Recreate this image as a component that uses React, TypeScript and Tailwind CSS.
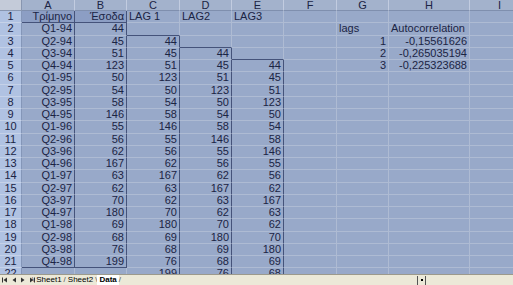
const quarters = [
  'Q1-94', 'Q2-94', 'Q3-94', 'Q4-94',
  'Q1-95', 'Q2-95', 'Q3-95', 'Q4-95',
  'Q1-96', 'Q2-96', 'Q3-96', 'Q4-96',
  'Q1-97', 'Q2-97', 'Q3-97', 'Q4-97',
  'Q1-98', 'Q2-98', 'Q3-98', 'Q4-98',
];
const sales = [44, 45, 51, 123, 50, 54, 58, 146, 55, 56, 62, 167, 63, 62, 70, 180, 69, 68, 76, 199];

const cols = ['A', 'B', 'C', 'D', 'E', 'F', 'G', 'H', 'I'];
const widths = ['w-[53px]', 'w-[52px]', 'w-[53px]', 'w-[52px]', 'w-[52px]', 'w-[53px]', 'w-[52px]', 'w-[81px]', 'w-[60px]'];

type Cell = { text?: string | number; align?: 'l' | 'r'; cls?: string };

function lag(row: number, n: number): Cell {
  // row is sheet row number, data starts on row 2
  const i = row - 2 - n;
  if (i < 0 || i >= sales.length) return {};
  return { text: sales[i], align: 'r' };
}

function cellsFor(row: number): Cell[] {
  const out: Cell[] = Array.from({ length: 9 }, () => ({}));
  if (row === 1) {
    out[0] = { text: 'Τρίμηνο', align: 'r', cls: 'bg-[#8c9ec4]' };
    out[1] = { text: 'Έσοδα', align: 'r', cls: 'bg-[#8c9ec4]' };
    out[2] = { text: 'LAG 1', align: 'l' };
    out[3] = { text: 'LAG2', align: 'l' };
    out[4] = { text: 'LAG3', align: 'l' };
    return out;
  }
  if (row <= 21) {
    out[0] = { text: quarters[row - 2], align: 'r' };
    out[1] = { text: sales[row - 2], align: 'r' };
  }
  out[2] = lag(row, 1);
  out[3] = lag(row, 2);
  out[4] = lag(row, 3);
  if (row === 2) {
    out[6] = { text: 'lags', align: 'l' };
    out[7] = { text: 'Autocorrelation', align: 'l' };
  }
  const ac: Record<number, [string, string]> = {
    3: ['1', '-0,15561626'],
    4: ['2', '-0,265035194'],
    5: ['3', '-0,225323688'],
  };
  if (ac[row]) {
    out[6] = { text: ac[row][0], align: 'r' };
    out[7] = { text: ac[row][1], align: 'r' };
  }
  return out;
}

const LIGHT_R = 'border-r-[#aebbd3]';
const LIGHT_B = 'border-b-[#aebbd3]';
const DARK_R = 'border-r-[#45537a]';
const DARK_B = 'border-b-[#45537a]';

function borderFor(row: number, col: number) {
  // dark boxes round the data ranges
  let r = LIGHT_R;
  let b = LIGHT_B;
  if (col <= 1 && row <= 21) r = DARK_R;
  if (col <= 1 && (row === 1 || row === 21)) b = DARK_B;
  const start: Record<number, number> = { 2: 2, 3: 3, 4: 4 };
  if (start[col] !== undefined) {
    if (row === start[col]) b = DARK_B;
    if (row > start[col]) r = DARK_R;
  }
  return `border-r border-b ${r} ${b}`;
}

function SheetRow({ row }: { row: number }) {
  const cells = cellsFor(row);
  return (
    <div className="flex h-[12.25px] shrink-0">
      <div className="w-[22px] shrink-0 bg-[#b0c2e2] border-r border-b border-r-[#8496b8] border-b-[#c6d2e8] flex items-center justify-center text-[11px] leading-none">
        {row}
      </div>
      {cells.map((c, i) => (
        <div
          key={i}
          className={`${widths[i]} shrink-0 flex items-center px-[2px] whitespace-nowrap leading-none ${borderFor(row, i)} ${
            c.align === 'r' ? 'justify-end' : 'justify-start'
          } ${c.cls ?? ''}`}
        >
          {c.text}
        </div>
      ))}
    </div>
  );
}

function Arrow({ dir, bar }: { dir: 'l' | 'r'; bar?: boolean }) {
  return (
    <svg width="6" height="6" viewBox="0 0 6 6" className="shrink-0">
      {dir === 'l' ? <polygon points="5,0.5 5,5.5 1.5,3" fill="#333" /> : <polygon points="1,0.5 1,5.5 4.5,3" fill="#333" />}
      {bar && (dir === 'l' ? <rect x="0" y="0.5" width="1" height="5" fill="#333" /> : <rect x="5" y="0.5" width="1" height="5" fill="#333" />)}
    </svg>
  );
}

function TabBar() {
  return (
    <div className="h-[11px] shrink-0 bg-[#ece9d8] border-t border-[#9c9a8c] flex items-center text-[8px] leading-none text-black font-['Liberation_Sans',sans-serif]">
      <div className="flex items-center gap-[3px] pl-[2px] w-[32px]">
        <Arrow dir="l" bar />
        <Arrow dir="l" />
        <Arrow dir="r" />
        <Arrow dir="r" bar />
      </div>
      <div className="flex items-center h-full">
        <span className="text-[#555]">\</span>
        <span className="px-[2px]">Sheet1</span>
        <span className="text-[#555]">/</span>
        <span className="px-[2px]">Sheet2</span>
        <span className="text-[#555]">\</span>
        <span className="px-[2px] font-bold bg-white h-full flex items-center">Data</span>
        <span className="text-[#555]">/</span>
      </div>
      <div className="ml-[296px] h-[9px] w-[9px] border-x border-[#555] flex items-center justify-center">
        <span className="block w-[2px] h-[2px] bg-black" />
      </div>
    </div>
  );
}

export default function App() {
  const rows = Array.from({ length: 22 }, (_, i) => i + 1);
  return (
    <div className="w-[513px] h-[285px] overflow-hidden flex flex-col bg-[#98a9c9] text-[#1b2444] text-[11px] font-['Liberation_Sans',Arial,sans-serif]">
      <div className="flex-1 overflow-hidden flex flex-col">
        <div className="flex h-[11px] shrink-0">
          <div className="w-[22px] shrink-0 bg-[#c4cbd9] border-r border-b border-[#8896b0]" />
          {cols.map((c, i) => (
            <div
              key={c}
              className={`${widths[i]} shrink-0 bg-[#a3b2cc] border-r border-b border-r-[#c2cce0] border-b-[#7f8fae] flex items-center justify-center text-[11px] leading-none`}
            >
              {c}
            </div>
          ))}
        </div>
        {rows.map((r) => (
          <SheetRow key={r} row={r} />
        ))}
      </div>
      <TabBar />
    </div>
  );
}
